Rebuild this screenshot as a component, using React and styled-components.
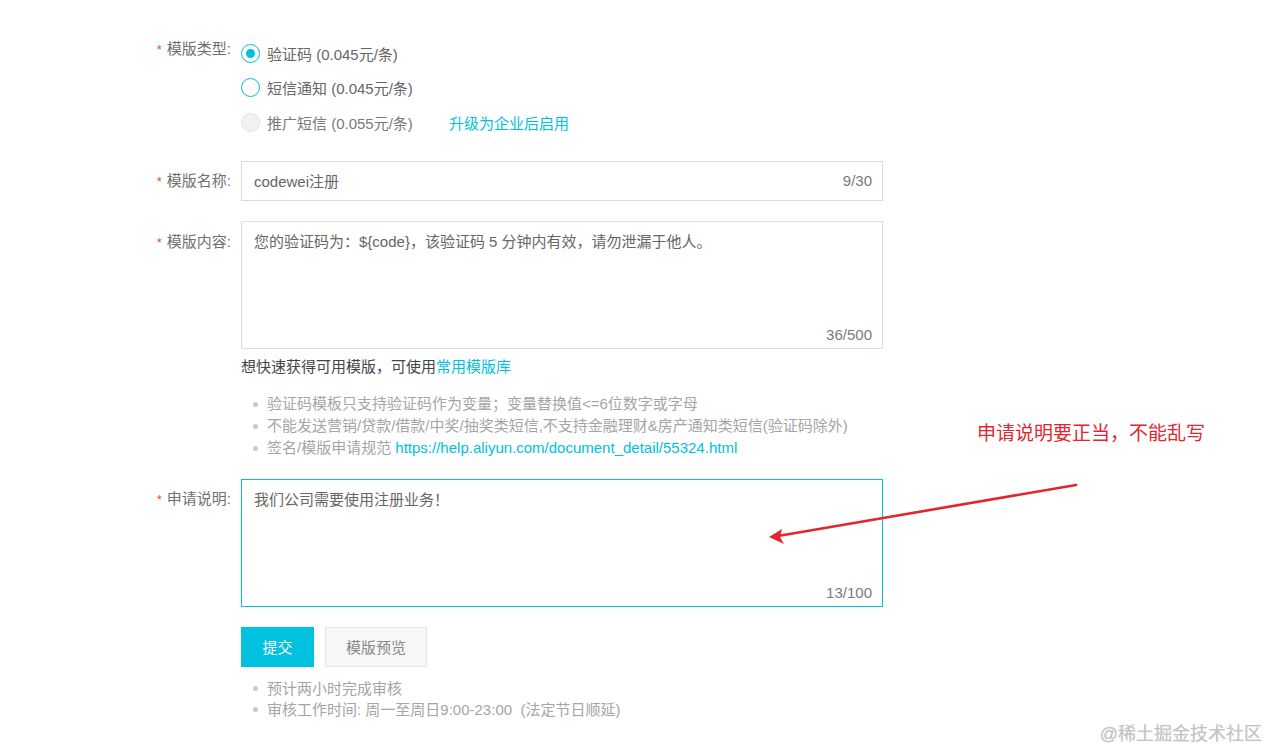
import React from "react";
import styled, { createGlobalStyle } from "styled-components";

const GlobalStyle = createGlobalStyle`
  body {
    margin: 0;
    background: #fff;
    font-family: "Liberation Sans", "Noto Sans CJK SC", sans-serif;
    font-size: 15px;
    color: #666;
  }
`;

const Page = styled.div`
  position: relative;
  width: 1269px;
  height: 749px;
  overflow: hidden;
  padding: 36px 0 0 150px;
  box-sizing: border-box;
`;

const Form = styled.div`
  width: 733px;
`;

const FormItem = styled.div`
  display: grid;
  grid-template-columns: 81px 642px;
  column-gap: 10px;
  margin-bottom: ${(p) => p.$mb || 20}px;
`;

const Label = styled.div`
  text-align: right;
  color: #707070;
  line-height: 20px;
  padding-top: ${(p) => p.$pt || 0}px;
  white-space: nowrap;
`;

const Star = styled.span`
  color: #e2533c;
  margin-right: 5px;
  font-size: 13px;
`;

const RadioGroup = styled.div`
  display: flex;
  flex-direction: column;
`;

const RadioRow = styled.label`
  display: flex;
  align-items: center;
  height: 34.5px;
  color: ${(p) => (p.$disabled ? "#7a7a7a" : "#666")};
`;

const Circle = styled.span`
  width: 17px;
  height: 17px;
  border-radius: 50%;
  border: 1px solid ${(p) => (p.$disabled ? "#e2e2e2" : "#00c1de")};
  background: ${(p) => (p.$disabled ? "#f2f2f2" : "#fff")};
  display: flex;
  align-items: center;
  justify-content: center;
  margin-right: 7px;
  flex-shrink: 0;

  &::after {
    content: "";
    display: ${(p) => (p.$checked ? "block" : "none")};
    width: 9px;
    height: 9px;
    border-radius: 50%;
    background: #00c1de;
  }
`;

const Link = styled.a`
  color: #00c1de;
  text-decoration: none;
  margin-left: ${(p) => p.$ml || 0}px;
`;

const InputBox = styled.div`
  position: relative;
  height: 40px;
  border: 1px solid #dcdcdc;
  box-sizing: border-box;
  display: flex;
  align-items: center;
  justify-content: space-between;
  padding: 0 10px 0 12px;
  color: #666;
`;

const Counter = styled.span`
  color: #7a7a7a;
`;

const TextArea = styled.div`
  position: relative;
  height: 128px;
  box-sizing: border-box;
  border: 1px solid ${(p) => (p.$focus ? "#00c1de" : "#dcdcdc")};
  padding: 10px 12px;
  line-height: 20px;
  color: #666;
`;

const AreaCounter = styled.span`
  position: absolute;
  right: 10px;
  bottom: 3px;
  color: #7a7a7a;
`;

const Hint = styled.div`
  margin-top: 8px;
  line-height: 20px;
  color: #444;
`;

const Bullets = styled.ul`
  list-style: none;
  margin: ${(p) => p.$mt || 0}px 0 0;
  padding: 0 0 0 12px;
`;

const Bullet = styled.li`
  position: relative;
  padding-left: 14px;
  line-height: ${(p) => p.$lh || 22}px;
  color: #a5a5a5;
  white-space: nowrap;

  &::before {
    content: "";
    position: absolute;
    left: 0;
    top: 50%;
    width: 5px;
    height: 5px;
    margin-top: -2px;
    border-radius: 50%;
    background: #c8c8c8;
  }
`;

const Buttons = styled.div`
  display: flex;
  gap: 11px;
`;

const Button = styled.button`
  height: 40px;
  width: ${(p) => p.$w}px;
  padding: 0;
  font-family: inherit;
  font-size: 15px;
  border: 1px solid ${(p) => (p.$primary ? "#00c1de" : "#e5e5e5")};
  background: ${(p) => (p.$primary ? "#00c1de" : "#f7f7f7")};
  color: ${(p) => (p.$primary ? "#fff" : "#888")};
  cursor: pointer;
`;

const Note = styled.div`
  position: absolute;
  left: 977px;
  top: 421px;
  font-size: 19px;
  line-height: 26px;
  color: #e2262f;
`;

const Arrow = styled.svg`
  position: absolute;
  left: 760px;
  top: 475px;
`;

const Watermark = styled.div`
  position: absolute;
  right: 7px;
  bottom: 4px;
  font-size: 18px;
  color: #c4c4c4;
  text-shadow: 0 0 1px rgba(0, 0, 0, 0.15);
`;

const App = () => {
  return (
    <Page>
      <GlobalStyle />
      <Form>
        <FormItem $mb={21}>
          <Label $pt={3}>
            <Star>*</Star>模版类型:
          </Label>
          <RadioGroup>
            <RadioRow>
              <Circle $checked />
              验证码 (0.045元/条)
            </RadioRow>
            <RadioRow>
              <Circle />
              短信通知 (0.045元/条)
            </RadioRow>
            <RadioRow $disabled>
              <Circle $disabled />
              推广短信 (0.055元/条)
              <Link $ml={36}>升级为企业后启用</Link>
            </RadioRow>
          </RadioGroup>
        </FormItem>

        <FormItem>
          <Label $pt={10}>
            <Star>*</Star>模版名称:
          </Label>
          <InputBox>
            <span>codewei注册</span>
            <Counter>9/30</Counter>
          </InputBox>
        </FormItem>

        <FormItem>
          <Label $pt={11}>
            <Star>*</Star>模版内容:
          </Label>
          <div>
            <TextArea>
              您的验证码为：${"{code}"}，该验证码 5 分钟内有效，请勿泄漏于他人。
              <AreaCounter>36/500</AreaCounter>
            </TextArea>
            <Hint>
              想快速获得可用模版，可使用<Link>常用模版库</Link>
            </Hint>
            <Bullets $mt={16}>
              <Bullet>验证码模板只支持验证码作为变量；变量替换值&lt;=6位数字或字母</Bullet>
              <Bullet>不能发送营销/贷款/借款/中奖/抽奖类短信,不支持金融理财&amp;房产通知类短信(验证码除外)</Bullet>
              <Bullet>
                签名/模版申请规范{" "}
                <Link>https://help.aliyun.com/document_detail/55324.html</Link>
              </Bullet>
            </Bullets>
          </div>
        </FormItem>

        <FormItem $mb={20}>
          <Label $pt={10}>
            <Star>*</Star>申请说明:
          </Label>
          <TextArea $focus>
            我们公司需要使用注册业务！
            <AreaCounter>13/100</AreaCounter>
          </TextArea>
        </FormItem>

        <FormItem>
          <div />
          <div>
            <Buttons>
              <Button $primary $w={73}>提交</Button>
              <Button $w={102}>模版预览</Button>
            </Buttons>
            <Bullets $mt={11}>
              <Bullet $lh={21}>预计两小时完成审核</Bullet>
              <Bullet $lh={21}>审核工作时间: 周一至周日9:00-23:00&nbsp;&nbsp;(法定节日顺延)</Bullet>
            </Bullets>
          </div>
        </FormItem>
      </Form>

      <Note>申请说明要正当，不能乱写</Note>
      <Arrow width="330" height="75" viewBox="0 0 330 75">
        <line x1="316" y1="10" x2="18" y2="61" stroke="#e2262f" strokeWidth="2.6" strokeLinecap="round" />
        <polygon points="9,62 22,54 20,62 24,69" fill="#e2262f" />
      </Arrow>
      <Watermark>@稀土掘金技术社区</Watermark>
    </Page>
  );
};

export default App;
